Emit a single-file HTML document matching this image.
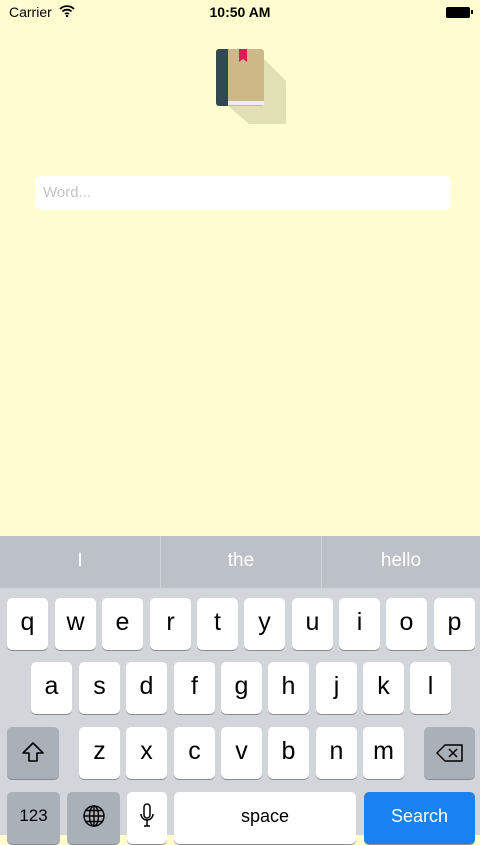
<!DOCTYPE html><html><head><style>
body{margin:0;width:480px;height:835px;overflow:hidden;background:#fefdd0;font-family:"Liberation Sans",sans-serif;position:relative}
.a{position:absolute}
.k{position:absolute;background:#fff;border-radius:5px;box-shadow:0 1px 0 #888d93;font-size:25px;color:#000;text-align:center;width:41px;height:52px;line-height:48px}
.g{background:#aab0b8}
</style></head><body>
<div class="a" style="left:9px;top:4px;font-size:14px">Carrier</div>
<svg class="a" style="left:59px;top:5px" width="16" height="12" viewBox="0 0 16 12"><path d="M1 4a10 10 0 0 1 14 0M3.5 6.5a6.5 6.5 0 0 1 9 0M6 9a3 3 0 0 1 4 0" stroke="#000" stroke-width="1.8" fill="none"/><circle cx="8" cy="11" r="1.2"/></svg>
<div class="a" style="left:0;width:480px;top:4px;text-align:center;font-size:14px;font-weight:bold">10:50 AM</div>
<div class="a" style="left:446px;top:7px;width:22px;height:9px;background:#000;border:1px solid #000;border-radius:2px"></div>
<div class="a" style="left:471px;top:10px;width:2px;height:4px;background:#000"></div>
<svg class="a" style="left:216px;top:49px" width="72" height="76" viewBox="0 0 72 76"><path d="M48 10 L70 32 L70 75 L33 75 L2 48 Z" fill="#e2dfb4"/><rect x="0" y="0" width="48" height="57" rx="3" fill="#cfb887"/><path d="M0 3a3 3 0 0 1 3-3h9v57H3a3 3 0 0 1-3-3z" fill="#324851"/><rect x="12" y="52" width="36" height="4" fill="#eee"/><path d="M23 0h8v13l-4-3-4 3z" fill="#e0195a"/></svg>
<div class="a" style="left:35px;top:176px;width:416px;height:34px;background:#fff;border-radius:6px"></div>
<div class="a" style="left:43px;top:184px;font-size:15px;color:#c4c4c4">Word...</div>
<div class="a" style="left:0;top:536px;width:480px;height:299px;background:#d2d5da"></div>
<div class="a" style="left:0;top:536px;width:480px;height:52px;background:#bcc1c7"></div>
<div class="a" style="left:160px;top:536px;width:1px;height:52px;background:#cfd2d6"></div>
<div class="a" style="left:321px;top:536px;width:1px;height:52px;background:#cfd2d6"></div>
<div class="a" style="left:0;width:160px;top:550px;text-align:center;color:#fff;font-size:19px">I</div>
<div class="a" style="left:161px;width:160px;top:550px;text-align:center;color:#fff;font-size:19px">the</div>
<div class="a" style="left:322px;width:158px;top:550px;text-align:center;color:#fff;font-size:19px">hello</div>
<div class="k" style="left:7px;top:598px">q</div><div class="k" style="left:55px;top:598px">w</div><div class="k" style="left:102px;top:598px">e</div><div class="k" style="left:150px;top:598px">r</div><div class="k" style="left:197px;top:598px">t</div><div class="k" style="left:244px;top:598px">y</div><div class="k" style="left:292px;top:598px">u</div><div class="k" style="left:339px;top:598px">i</div><div class="k" style="left:386px;top:598px">o</div><div class="k" style="left:434px;top:598px">p</div>
<div class="k" style="left:31px;top:662px">a</div><div class="k" style="left:79px;top:662px">s</div><div class="k" style="left:126px;top:662px">d</div><div class="k" style="left:174px;top:662px">f</div><div class="k" style="left:221px;top:662px">g</div><div class="k" style="left:268px;top:662px">h</div><div class="k" style="left:316px;top:662px">j</div><div class="k" style="left:363px;top:662px">k</div><div class="k" style="left:410px;top:662px">l</div>
<div class="k g" style="left:7px;top:727px;width:52px"><svg width="24" height="22" viewBox="0 0 24 22" style="margin-top:14px"><path d="M12 2 L22 12 H16 V20 H8 V12 H2 Z" fill="none" stroke="#000" stroke-width="1.6" stroke-linejoin="round"/></svg></div>
<div class="k" style="left:79px;top:727px">z</div><div class="k" style="left:126px;top:727px">x</div><div class="k" style="left:174px;top:727px">c</div><div class="k" style="left:221px;top:727px">v</div><div class="k" style="left:268px;top:727px">b</div><div class="k" style="left:316px;top:727px">n</div><div class="k" style="left:363px;top:727px">m</div>
<div class="k g" style="left:424px;top:727px;width:51px"><svg width="28" height="20" viewBox="0 0 28 20" style="margin-top:16px"><path d="M9 2 H26 V18 H9 L1 10 Z" fill="none" stroke="#000" stroke-width="1.5" stroke-linejoin="round"/><path d="M13 6 L21 14 M21 6 L13 14" stroke="#000" stroke-width="1.5"/></svg></div>
<div class="k g" style="left:7px;top:792px;width:53px;font-size:17px">123</div>
<div class="k g" style="left:67px;top:792px;width:53px"><svg width="24" height="24" viewBox="0 0 24 24" style="margin-top:12px" fill="none" stroke="#000" stroke-width="1.4"><circle cx="12" cy="12" r="10"/><ellipse cx="12" cy="12" rx="4.5" ry="10"/><path d="M2 12H22M4 6.5H20M4 17.5H20M12 2V22"/></svg></div>
<div class="k" style="left:127px;top:792px;width:40px"><svg width="16" height="26" viewBox="0 0 16 26" style="margin-top:11px" fill="none" stroke="#000" stroke-width="1.5"><rect x="5" y="1" width="6" height="14" rx="3"/><path d="M2 11a6 6 0 0 0 12 0M8 17V23M5 23H11"/></svg></div>
<div class="k" style="left:174px;top:792px;width:182px;font-size:18px;line-height:48px">space</div>
<div class="k" style="left:364px;top:792px;width:111px;background:#1a82f0;color:#fff;font-size:18px">Search</div>
</body></html>
